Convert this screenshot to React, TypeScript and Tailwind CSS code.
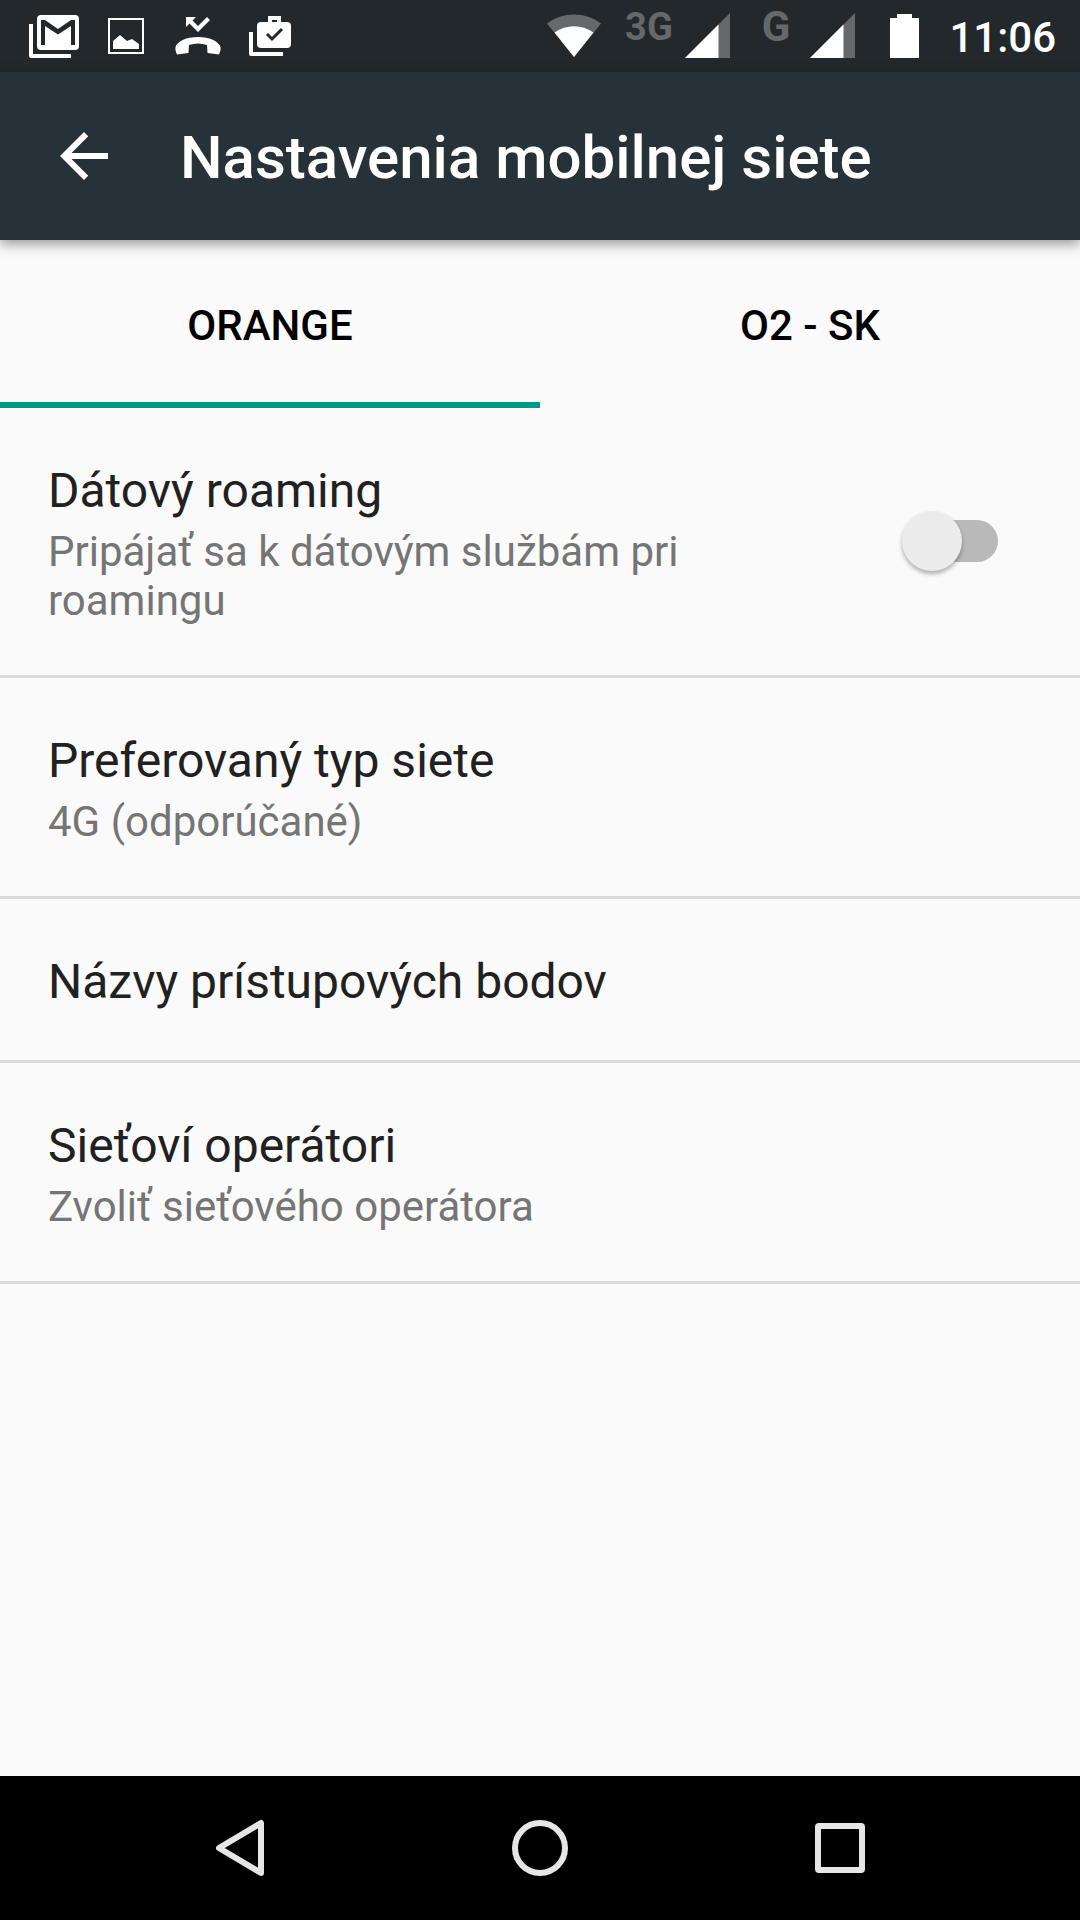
import { ReactNode, useState } from "react";

const tabs = ["ORANGE", "O2 - SK"];

const preferences = [
  { title: "Preferovaný typ siete", summary: "4G (odporúčané)" },
  { title: "Názvy prístupových bodov" },
  { title: "Sieťoví operátori", summary: "Zvoliť sieťového operátora" },
];

function SignalIcon() {
  return (
    <svg width="46" height="46" viewBox="0 0 46 46">
      <path fill="#66696c" d="M45 0v45H0z" />
      <path fill="#fff" d="M33.500 11.500V45H0z" />
    </svg>
  );
}

function StatusBar() {
  return (
    <div className="flex h-[72px] items-center bg-[#23282c] px-[24px] text-white">
      <div className="flex items-center">
        <svg width="60" height="46" viewBox="24 12 60 46" aria-label="Gmail">
          <path fill="none" stroke="#fff" strokeWidth="4" strokeLinejoin="round" d="M31 23v32h40" />
          <rect x="37" y="14" width="42" height="35" rx="4" fill="#fff" />
          <path fill="#23282c" d="M41 19h4l13 9 13-9h4v25h-4V25l-13 8.500L45 25v19h-4z" />
        </svg>
        <svg className="ml-6" width="36" height="36" viewBox="0 0 36 36">
          <rect x="1" y="1" width="34" height="34" fill="none" stroke="#fff" strokeWidth="2" />
          <path fill="#fff" d="M5 31v-8l7-6 7 6 5-2 7 5v5z" />
        </svg>
        <svg className="ml-[31px]" width="46" height="40" viewBox="175 16 46 40">
          <path fill="#fff" d="M186 17h10l-3.500 3.500 5.500 5.500 9-9 3 3-12 12-8.500-8.500L186 27z" />
          <path fill="#fff" d="M175.500 47c2-6 11-10 22.500-10s20.500 4 22.500 10c.5 3-.5 5-1.500 7.500l-11.500-1.500-.500-8c-6-2-12-2-18 0l-.500 8-11.500 1.500c-1-2.500-2-4.500-1.500-7.500z" />
        </svg>
        <svg className="ml-[27px]" width="44" height="42" viewBox="248 16 44 42">
          <path fill="none" stroke="#fff" strokeWidth="4" strokeLinejoin="round" d="M251 33v22h32" />
          <rect x="257" y="23" width="34" height="26" rx="4" fill="#fff" />
          <path fill="none" stroke="#fff" strokeWidth="4" d="M270 24v-5h9v5" />
          <path fill="none" stroke="#23282c" strokeWidth="3" d="M267 35l5 5 10-10" />
        </svg>
      </div>

      <div className="ml-auto flex items-center">
        <svg width="54" height="44" viewBox="0 0 54 44">
          <path fill="#66696c" d="M27 43L0 9.500C16-2.500 38-2.500 54 9.500z" />
          <path fill="#fff" d="M27 43L7.500 18.500c12-8.500 27-8.500 39 0z" />
        </svg>
        <span className="ml-6 mb-[18px] text-[38px] leading-[44px] font-bold text-[#66696c]">3G</span>
        <span className="ml-3"><SignalIcon /></span>
        <span className="ml-[31px] mb-[18px] text-[42px] leading-[44px] font-bold text-[#66696c]">G</span>
        <span className="ml-5"><SignalIcon /></span>
        <svg className="ml-[34px]" width="30" height="44" viewBox="0 0 30 44">
          <path fill="#fff" d="M7 0h15v4h7v40H0V4h7z" />
        </svg>
        <time className="ml-[29px] pt-1 text-[42px] leading-[48px] font-medium">11:06</time>
      </div>
    </div>
  );
}

function Row({ title, summary, children }: { title: string; summary?: string; children?: ReactNode }) {
  return (
    <div className="flex items-center border-b-[3px] border-[#dadada] px-12">
      <div className="min-w-0 flex-1 pt-[54px] pb-[50px]">
        <h2 className="text-[48px] leading-[57px] text-[#212121]">{title}</h2>
        {summary && <p className="mt-2 text-[42px] leading-[49px] text-[#757575]">{summary}</p>}
      </div>
      {children}
    </div>
  );
}

function Switch({ label }: { label: string }) {
  const [on, setOn] = useState(false);

  return (
    <label className="relative mr-[34px] mb-0.5 ml-[170px] flex h-[60px] w-24 shrink-0 cursor-pointer items-center">
      <input
        type="checkbox"
        role="switch"
        aria-label={label}
        checked={on}
        onChange={(e) => setOn(e.target.checked)}
        className="peer sr-only"
      />
      <span className="ml-3 h-[42px] w-[84px] rounded-full bg-[#b9b9b9] peer-checked:bg-[#80cbc4]" />
      <span className="absolute top-0 left-0 size-[60px] rounded-full bg-[#ececec] shadow-[0_3px_4px_rgba(0,0,0,0.3)] peer-checked:left-9 peer-checked:bg-[#009688]" />
    </label>
  );
}

export default function App() {
  const [active, setActive] = useState(0);

  return (
    <div className="flex min-h-screen flex-col bg-[#fafafa] font-[Roboto,sans-serif]">
      <StatusBar />
      <header className="relative flex h-[168px] items-center bg-[#263238] px-12 shadow-[0_4px_12px_rgba(0,0,0,0.4)]">
        <button type="button" aria-label="Späť" className="size-[72px]">
          <svg width="72" height="72" viewBox="0 0 24 24">
            <path fill="#fff" d="M20 11H7.830l5.590-5.590L12 4l-8 8 8 8 1.410-1.410L7.830 13H20v-2z" />
          </svg>
        </button>
        <h1 className="ml-[60px] pt-1 text-[60px] leading-[72px] font-medium text-white">
          Nastavenia mobilnej siete
        </h1>
      </header>

      <div role="tablist" className="grid grid-cols-2">
        {tabs.map((tab, i) => (
          <button
            key={tab}
            type="button"
            role="tab"
            aria-selected={active === i}
            onClick={() => setActive(i)}
            className={`h-[168px] border-b-[6px] pt-2.5 text-[42px] leading-[48px] font-medium text-black ${
              active === i ? "border-[#009688]" : "border-transparent"
            }`}
          >
            {tab}
          </button>
        ))}
      </div>

      <main className="flex-1">
        <Row title="Dátový roaming" summary="Pripájať sa k dátovým službám pri roamingu">
          <Switch label="Dátový roaming" />
        </Row>
        {preferences.map((pref) => (
          <Row key={pref.title} title={pref.title} summary={pref.summary} />
        ))}
      </main>

      <nav className="flex h-36 items-center justify-center gap-[240px] bg-black">
        <button type="button" aria-label="Naspäť">
          <svg width="60" height="60" viewBox="0 0 60 60">
            <path fill="none" stroke="#e6e6e6" strokeWidth="6" strokeLinejoin="round" d="M51 5v50L9 30z" />
          </svg>
        </button>
        <button type="button" aria-label="Domov">
          <svg width="60" height="60" viewBox="0 0 60 60">
            <circle cx="30" cy="30" r="25" fill="none" stroke="#e6e6e6" strokeWidth="6" />
          </svg>
        </button>
        <button type="button" aria-label="Prehľad">
          <svg width="60" height="60" viewBox="0 0 60 60">
            <rect x="8" y="8" width="44" height="44" rx="1" fill="none" stroke="#e6e6e6" strokeWidth="6" strokeLinejoin="round" />
          </svg>
        </button>
      </nav>
    </div>
  );
}
